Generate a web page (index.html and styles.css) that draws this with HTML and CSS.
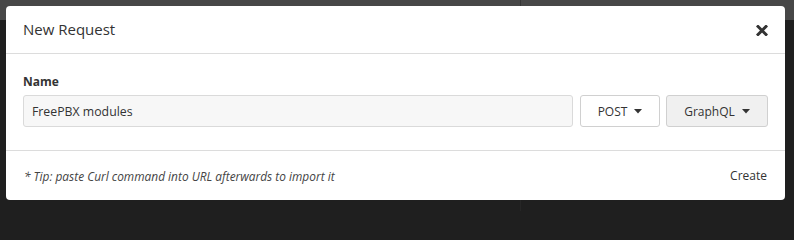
FILE: index.html
```html
<!DOCTYPE html>
<html>
<head>
<meta charset="utf-8">
<link rel="stylesheet" href="styles.css">
</head>
<body>
<div class="app">
  <div class="topbar"><div class="pane-a"></div><div class="pane-b"></div></div>
  <div class="workspace"><div class="pane-a"></div><div class="pane-b"></div></div>
</div>
<div class="modal">
  <div class="modal-header">
    <span class="modal-title">New Request</span>
    <button class="close" aria-label="Close">
      <svg width="12" height="11" viewBox="0 0 12 11"><path d="M2 1.5 L10 9.5 M10 1.5 L2 9.5" stroke="#333" stroke-width="3" stroke-linecap="square"/></svg>
    </button>
  </div>
  <div class="modal-body">
    <label class="label">Name</label>
    <div class="row">
      <input class="input" type="text" value="FreePBX modules">
      <button class="btn">POST <svg class="caret" width="8" height="5" viewBox="0 0 8 5"><path d="M0 0 H8 L4 4.5 Z" fill="#333"/></svg></button>
      <button class="btn btn-grey">GraphQL <svg class="caret" width="8" height="5" viewBox="0 0 8 5"><path d="M0 0 H8 L4 4.5 Z" fill="#333"/></svg></button>
    </div>
  </div>
  <div class="modal-footer">
    <span class="tip">* Tip: paste Curl command into URL afterwards to import it</span>
    <button class="create">Create</button>
  </div>
</div>
</body>
</html>
```
FILE: styles.css
```css
html, body {
  margin: 0;
  padding: 0;
  width: 794px;
  height: 211px;
  overflow: hidden;
  background: #1f1f1f;
  font-family: "Open Sans", "Noto Sans", sans-serif;
  color: #333;
}
.app {
  display: flex;
  flex-direction: column;
  height: 211px;
}
.topbar {
  height: 20px;
  display: flex;
  background: #474747;
}
.workspace {
  flex: 1;
  display: flex;
  background: #1f1f1f;
}
.pane-a { width: 520px; border-right: 1px solid rgba(0,0,0,0.25); }
.workspace .pane-a { border-right-color: #262626; }
.pane-b { flex: 1; }

.modal {
  position: absolute;
  left: 6px;
  top: 6px;
  width: 779px;
  height: 194px;
  background: #fff;
  border-radius: 4px;
  display: flex;
  flex-direction: column;
  box-sizing: border-box;
}
.modal-header {
  height: 48px;
  flex: none;
  box-sizing: border-box;
  border-bottom: 1px solid #dcdcdc;
  display: flex;
  align-items: center;
  justify-content: space-between;
  padding: 0 17px 1px 17px;
}
.modal-title {
  font-size: 15px;
  color: #333;
}
.close {
  border: 0;
  background: none;
  padding: 0;
  margin: 0;
  display: flex;
  align-items: center;
  position: relative;
  top: 1px;
}
.modal-body {
  padding: 20px 17px 0 17px;
  height: 97px;
  flex: none;
  box-sizing: border-box;
  border-bottom: 1px solid #dcdcdc;
}
.label {
  display: block;
  font-size: 12px;
  font-weight: 700;
  line-height: 16px;
  color: #333;
}
.row {
  display: flex;
  margin-top: 5px;
  height: 32px;
}
.input {
  flex: 1;
  height: 32px;
  box-sizing: border-box;
  border: 1px solid #dadada;
  border-radius: 3px;
  background: #f7f7f7;
  font-family: "Open Sans", "Noto Sans", sans-serif;
  font-size: 12.3px;
  color: #333;
  padding: 0 8px;
  margin: 0 7px 0 0;
  outline: none;
}
.btn {
  height: 32px;
  box-sizing: border-box;
  border: 1px solid #d0d0d0;
  border-radius: 3px;
  background: #fff;
  font-family: "Open Sans", "Noto Sans", sans-serif;
  font-size: 12px;
  color: #333;
  padding: 0;
  width: 80px;
  display: flex;
  align-items: center;
  justify-content: center;
  gap: 7px;
}
.btn-grey {
  background: #f0f0f0;
  width: 102px;
  margin-left: 6px;
}
.caret { display: block; }
.modal-footer {
  flex: 1;
  display: flex;
  align-items: center;
  justify-content: space-between;
  padding: 0 18px 0 18px;
}
.tip {
  font-size: 11.9px;
  font-style: italic;
  color: #444;
}
.create {
  border: 0;
  background: none;
  padding: 0;
  font-family: "Open Sans", "Noto Sans", sans-serif;
  font-size: 12px;
  color: #333;
}
```
